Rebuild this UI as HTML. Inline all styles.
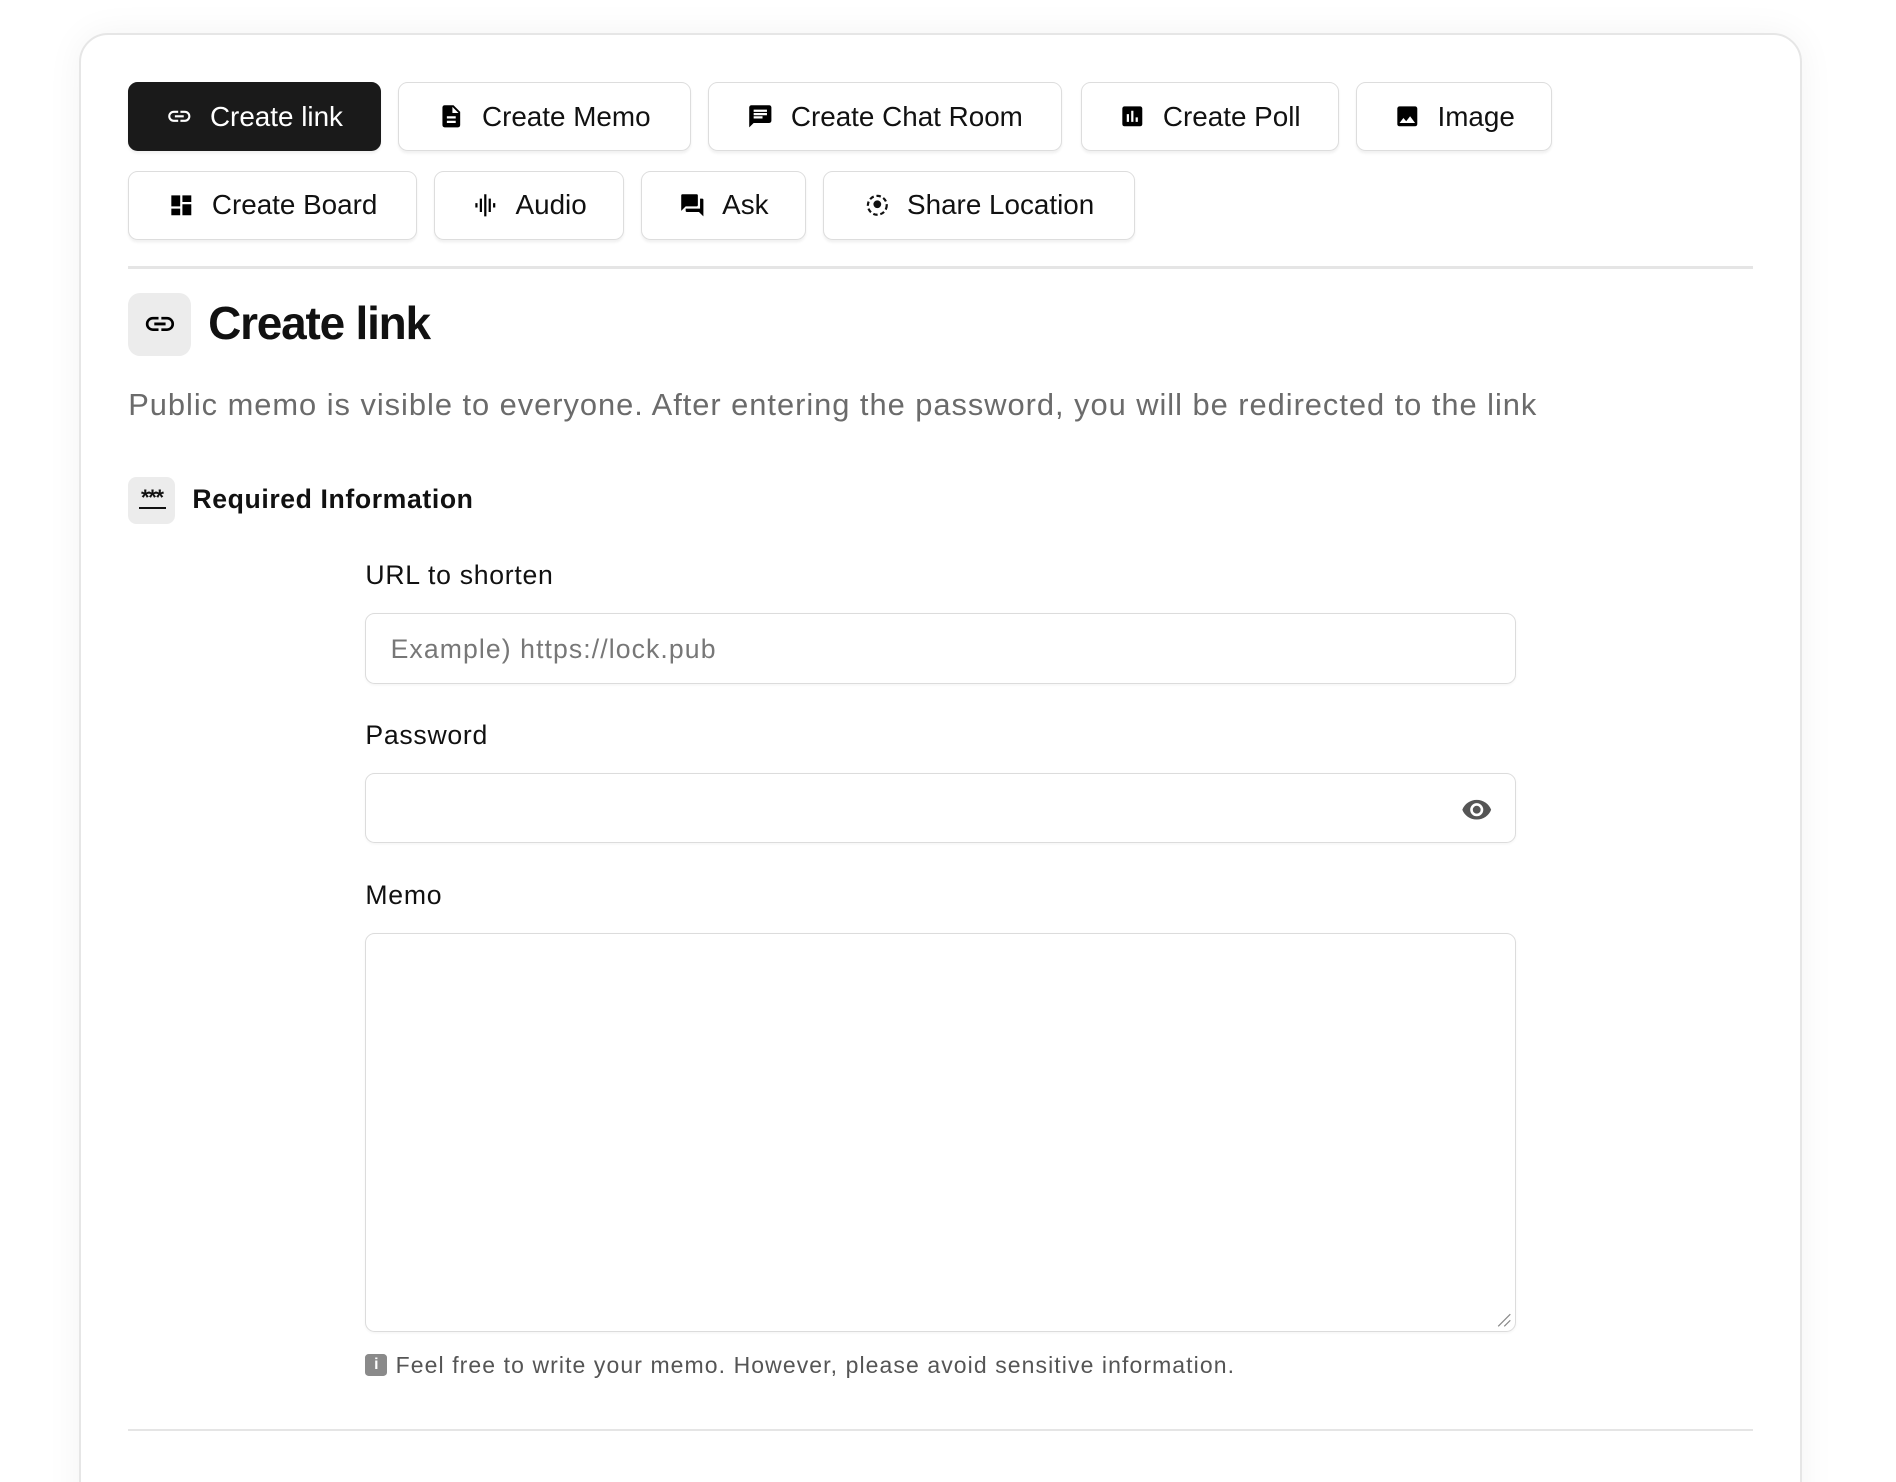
<!DOCTYPE html>
<html><head><meta charset="utf-8"><style>
html,body{margin:0;padding:0;background:#fff;overflow:hidden}
body{width:1896px;height:1482px}
#w{zoom:1.21;position:relative;width:1567px;height:1225px;overflow:hidden;font-family:"Liberation Sans",sans-serif;color:#111}
.card{position:absolute;left:65px;top:27px;width:1421px;height:1250px;border:2px solid #e6e6e6;border-radius:24px;box-shadow:0 0 30px rgba(0,0,0,.05);background:#fff}
.b{position:absolute;height:57px;border:1px solid #ddd;border-radius:8px;box-shadow:0 2px 2px rgba(0,0,0,.06);display:flex;align-items:center;justify-content:center;gap:14px;font-size:23px;background:#fff;box-sizing:border-box}
.b.on{background:#1a1a1a;color:#fff;border-color:#1a1a1a}
.b svg{width:22px;height:22px}
.sep{position:absolute;left:106px;width:1343px;height:2px;background:#e5e5e5}
.lbl{position:absolute;left:302px;font-size:22px;font-weight:500;letter-spacing:.6px}
.in{position:absolute;left:302px;width:951px;border:1px solid #dcdcdc;border-radius:8px;box-sizing:border-box;box-shadow:0 1px 2px rgba(0,0,0,.04)}
</style></head><body><div id="w">
<div class="card"></div>
<div class="b on" style="left:106px;top:68px;width:209px"><svg viewBox="0 0 24 24" fill="#fff"><path d="M3.9 12c0-1.7 1.4-3.1 3.1-3.1h4V7H7a5 5 0 000 10h4v-1.9H7c-1.7 0-3.1-1.4-3.1-3.1zM8 13h8v-2H8v2zm9-6h-4v1.9h4c1.7 0 3.1 1.4 3.1 3.1s-1.4 3.1-3.1 3.1h-4V17h4a5 5 0 000-10z"/></svg>Create link</div>
<div class="b" style="left:329px;top:68px;width:242px"><svg viewBox="0 0 24 24"><path d="M14 2H6c-1.1 0-2 .9-2 2v16c0 1.1.9 2 2 2h12c1.1 0 2-.9 2-2V8l-6-6zm2 16H8v-2h8v2zm0-4H8v-2h8v2zm-3-5V3.5L18.5 9H13z"/></svg>Create Memo</div>
<div class="b" style="left:585px;top:68px;width:293px"><svg viewBox="0 0 24 24"><path d="M20 2H4c-1.1 0-2 .9-2 2v18l4-4h14c1.1 0 2-.9 2-2V4c0-1.1-.9-2-2-2zM6 9h12v2H6V9zm8 5H6v-2h8v2zm4-6H6V6h12v2z"/></svg>Create Chat Room</div>
<div class="b" style="left:893px;top:68px;width:214px"><svg viewBox="0 0 24 24"><path d="M19 3H5c-1.1 0-2 .9-2 2v14c0 1.1.9 2 2 2h14c1.1 0 2-.9 2-2V5c0-1.1-.9-2-2-2zM9 17H7v-7h2v7zm4 0h-2V7h2v10zm4 0h-2v-4h2v4z"/></svg>Create Poll</div>
<div class="b" style="left:1121px;top:68px;width:162px"><svg viewBox="0 0 24 24"><path d="M21 19V5c0-1.1-.9-2-2-2H5c-1.1 0-2 .9-2 2v14c0 1.1.9 2 2 2h14c1.1 0 2-.9 2-2zM8.5 13.5l2.5 3 3.5-4.5 4.5 6H5l3.5-4.5z"/></svg>Image</div>
<div class="b" style="left:106px;top:141px;width:239px"><svg viewBox="0 0 24 24"><path d="M3 13h8V3H3v10zm0 8h8v-6H3v6zm10 0h8V11h-8v10zm0-18v6h8V3h-8z"/></svg>Create Board</div>
<div class="b" style="left:359px;top:141px;width:157px"><svg viewBox="0 0 24 24"><path d="M7 18h2V6H7v12zm4 4h2V2h-2v20zm-8-8h2v-4H3v4zm12 4h2V6h-2v12zm4-8v4h2v-4h-2z"/></svg>Audio</div>
<div class="b" style="left:530px;top:141px;width:136px"><svg viewBox="0 0 24 24"><path d="M21 6h-2v9H6v2c0 .55.45 1 1 1h11l4 4V7c0-.55-.45-1-1-1zm-4 6V3c0-.55-.45-1-1-1H3c-.55 0-1 .45-1 1v14l4-4h10c.55 0 1-.45 1-1z"/></svg>Ask</div>
<div class="b" style="left:680px;top:141px;width:258px"><svg viewBox="0 0 24 24" fill="none" stroke="#111" stroke-width="2"><circle cx="12" cy="12" r="8.5" stroke-dasharray="4 2.5"/><circle cx="12" cy="11" r="2.5" fill="#111"/></svg>Share Location</div>
<div class="sep" style="top:220px"></div>
<div style="position:absolute;left:106px;top:242px;width:52px;height:52px;border-radius:10px;background:#ececec;display:flex;align-items:center;justify-content:center"><svg viewBox="0 0 24 24" width="28" height="28"><path d="M3.9 12c0-1.7 1.4-3.1 3.1-3.1h4V7H7a5 5 0 000 10h4v-1.9H7c-1.7 0-3.1-1.4-3.1-3.1zM8 13h8v-2H8v2zm9-6h-4v1.9h4c1.7 0 3.1 1.4 3.1 3.1s-1.4 3.1-3.1 3.1h-4V17h4a5 5 0 000-10z"/></svg></div>
<div style="position:absolute;left:172px;top:245px;font-size:38px;font-weight:bold;letter-spacing:-1px">Create link</div>
<div style="position:absolute;left:106px;top:320px;font-size:25.5px;color:#6b6b6b;letter-spacing:.8px">Public memo is visible to everyone. After entering the password, you will be redirected to the link</div>
<div style="position:absolute;left:106px;top:394px;width:39px;height:39px;border-radius:7px;background:#ececec;text-align:center;font-size:18px;font-weight:bold;line-height:34px;letter-spacing:-1px">***<div style="position:absolute;left:9px;top:25px;width:22px;height:2px;background:#111"></div></div>
<div style="position:absolute;left:159px;top:400px;font-size:22px;font-weight:bold;letter-spacing:.5px">Required Information</div>
<div class="lbl" style="top:463px">URL to shorten</div>
<div class="in" style="top:507px;height:58px"><span style="position:absolute;left:20px;top:16px;font-size:22px;color:#777;letter-spacing:.9px">Example) https://lock.pub</span></div>
<div class="lbl" style="top:595px">Password</div>
<div class="in" style="top:639px;height:58px"><svg viewBox="0 0 24 24" width="26" height="26" style="position:absolute;left:905px;top:16px" fill="#555"><path d="M12 4.5C7 4.5 2.7 7.6 1 12c1.7 4.4 6 7.5 11 7.5s9.3-3.1 11-7.5c-1.7-4.4-6-7.5-11-7.5zM12 17a5 5 0 110-10 5 5 0 010 10zm0-8a3 3 0 100 6 3 3 0 000-6z"/></svg></div>
<div class="lbl" style="top:727px">Memo</div>
<div class="in" style="top:771px;height:330px"><svg width="12" height="12" style="position:absolute;right:3px;bottom:3px" stroke="#888"><path d="M1 11L11 1M6 11L11 6"/></svg></div>
<div style="position:absolute;left:302px;top:1119px;width:18px;height:18px;background:#8a8a8a;border-radius:3px;color:#fff;font-size:13px;font-weight:bold;text-align:center;line-height:18px">i</div>
<div style="position:absolute;left:327px;top:1117px;font-size:19px;color:#555;letter-spacing:.9px">Feel free to write your memo. However, please avoid sensitive information.</div>
<div class="sep" style="top:1181px"></div>
</div></body></html>
